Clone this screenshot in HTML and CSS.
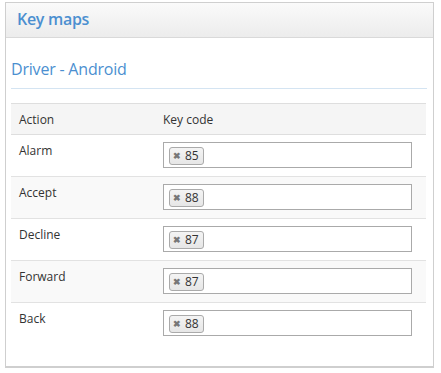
FILE: index.html
```html
<!DOCTYPE html>
<html lang="en">
<head>
    <meta charset="UTF-8">
    <title>Key maps</title>
    <link rel="stylesheet" href="styles.css">
</head>
<body>
    <div class="panel">
        <!-- panel header -->
        <div class="panel-header">Key maps</div>

        <div class="panel-body">
            <h3 class="section-title">Driver - Android</h3>

            <table class="keymap-table">
                <thead>
                    <tr>
                        <th class="col-action">Action</th>
                        <th>Key code</th>
                    </tr>
                </thead>
                <tbody>
                    <tr>
                        <td>Alarm</td>
                        <td><div class="tag-input"><span class="tag"><span class="tag-x">&#x2716;</span>85</span></div></td>
                    </tr>
                    <tr>
                        <td>Accept</td>
                        <td><div class="tag-input"><span class="tag"><span class="tag-x">&#x2716;</span>88</span></div></td>
                    </tr>
                    <tr>
                        <td>Decline</td>
                        <td><div class="tag-input"><span class="tag"><span class="tag-x">&#x2716;</span>87</span></div></td>
                    </tr>
                    <tr>
                        <td>Forward</td>
                        <td><div class="tag-input"><span class="tag"><span class="tag-x">&#x2716;</span>87</span></div></td>
                    </tr>
                    <tr>
                        <td>Back</td>
                        <td><div class="tag-input"><span class="tag"><span class="tag-x">&#x2716;</span>88</span></div></td>
                    </tr>
                </tbody>
            </table>
        </div>
    </div>
</body>
</html>
```

FILE: styles.css
```css
body {
    margin: 0;
    padding: 2px 7px 0 5px;
    font-family: "Open Sans", "Noto Sans", sans-serif;
    background-color: #fff;
    color: #333;
}

.panel {
    width: 429px;
    height: 366px;
    box-sizing: border-box;
    border: 1px solid #cfcfcf;
    border-bottom-width: 2px;
    background-color: #fff;
}

.panel-header {
    height: 35px;
    box-sizing: border-box;
    padding: 5px 11px;
    font-size: 16px;
    font-weight: 600;
    letter-spacing: -0.3px;
    color: #4b8fd0;
    background: linear-gradient(#fafafa, #ececec);
    border-bottom: 1px solid #d9d9d9;
}

.panel-body {
    padding: 20px 6px 0 5px;
}

.section-title {
    margin: 0 0 14px;
    padding-bottom: 8px;
    font-size: 16px;
    font-weight: 400;
    color: #4b8fd0;
    border-bottom: 1px solid #d4e4f2;
    letter-spacing: -0.2px;
}

/* table */
.keymap-table {
    width: 415px;
    border-collapse: collapse;
    font-size: 12px;
    color: #333;
}

.keymap-table th {
    height: 30px;
    padding: 0 8px;
    text-align: left;
    font-weight: 400;
    background-color: #f5f5f5;
    border-top: 1px solid #dedede;
    border-bottom: 1px solid #dedede;
}

.keymap-table .col-action {
    width: 136px;
}

.keymap-table th + th,
.keymap-table td + td {
    padding-left: 0;
}

.keymap-table td {
    padding: 7px 14px 8px 8px;
    vertical-align: top;
    line-height: 17px;
    border-bottom: 1px solid #e2e2e2;
}

.keymap-table td:first-child {
    padding-top: 7px;
}

.keymap-table tbody tr:nth-child(even) td {
    background-color: #f9f9f9;
}

.keymap-table tbody tr:last-child td {
    border-bottom: none;
}

/* tag input */
.tag-input {
    height: 26px;
    box-sizing: border-box;
    padding: 4px 5px;
    border: 1px solid #aaa;
    background-color: #fff;
}

.tag {
    display: inline-flex;
    align-items: center;
    height: 16px;
    padding: 0 4px 0 3px;
    border: 1px solid #aaa;
    border-radius: 3px;
    background: linear-gradient(#f4f4f4, #e6e6e6);
    font-size: 12px;
    color: #333;
    line-height: 16px;
    vertical-align: top;
}

.tag-x {
    margin-right: 4px;
    font-size: 9px;
    font-weight: 700;
    color: #777;
}
```
